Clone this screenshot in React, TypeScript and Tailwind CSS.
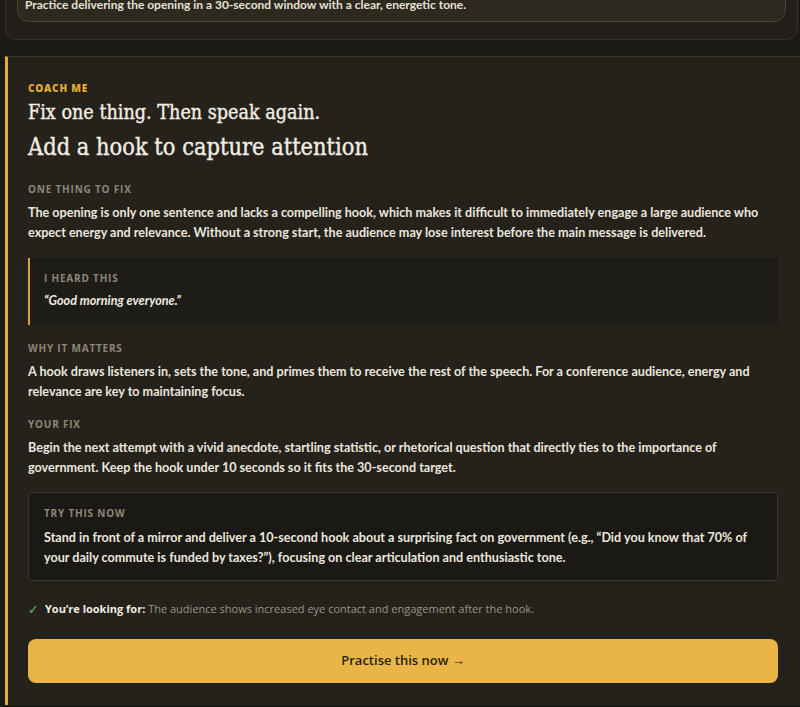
import React from 'react';

const sans = { fontFamily: '"Open Sans", "Noto Sans", sans-serif' };
const body = { fontFamily: 'Lato, "Open Sans", sans-serif' };
const serif = { fontFamily: '"DejaVu Serif Condensed", "DejaVu Serif", serif' };

function Label({ children }: { children: React.ReactNode }) {
  return (
    <p className="text-[10px] font-bold uppercase tracking-[0.08em] text-[#8e8777] leading-4">
      {children}
    </p>
  );
}

function Body({ children, className = '' }: { children: React.ReactNode; className?: string }) {
  return (
    <p className={`text-[12.6px] font-bold leading-5 text-[#ebe6dc] ${className}`} style={body}>
      {children}
    </p>
  );
}

export default function App() {
  return (
    <div className="min-h-[707px] bg-[#1c1a16] text-[#ebe6dc] overflow-hidden" style={sans}>
      {/* previous step card, scrolled mostly out of view */}
      <div className="-mt-[46px] ml-[5px] mr-[2px] rounded-b-xl border border-[#34302a] bg-[#221f1a] px-[11px] pt-[11px] pb-[17px]">
        <div className="rounded-xl border border-[#4a4430] bg-[#2c291f] px-[7px] pt-[30px] pb-[8px]">
          <p className="text-[12px] font-bold text-[#e6e1d4] leading-4" style={body}>
            Practice delivering the opening in a 30-second window with a clear, energetic tone.
          </p>
        </div>
      </div>

      {/* coach card */}
      <div className="mt-[16px] ml-[5px] border-l-[3px] border-t border-l-[#e6ad35] border-t-[#3a3528] bg-[#25221c] pl-[20px] pr-[22px] pt-[23px] pb-[22px]">
        <p className="text-[10px] font-extrabold uppercase tracking-[0.08em] text-[#e2aa33] leading-4">Coach me</p>
        <h2
          className="mt-[4px] text-[19.6px] leading-[26px] text-[#f2ede2] [-webkit-text-stroke:0.35px_#f2ede2]"
          style={serif}
        >
          Fix one thing. Then speak again.
        </h2>
        <h3
          className="mt-[6px] text-[23.4px] leading-[30px] text-[#f2ede2] [-webkit-text-stroke:0.35px_#f2ede2]"
          style={serif}
        >
          Add a hook to capture attention
        </h3>

        <div className="mt-[19px]">
          <Label>One thing to fix</Label>
          <Body className="mt-[6px]">
            The opening is only one sentence and lacks a compelling hook, which makes it difficult to immediately engage a large audience who expect energy and relevance. Without a strong start, the audience may lose interest before the main message is delivered.
          </Body>
        </div>

        <div className="mt-[15px] border-l-2 border-[#d9a133] bg-[#1e1c17] pl-[14px] pt-[12px] pb-[14px]">
          <Label>I heard this</Label>
          <p className="mt-[5px] text-[12.6px] font-bold italic leading-5 text-[#f0ebe0]" style={body}>
            “Good morning everyone.”
          </p>
        </div>

        <div className="mt-[15px]">
          <Label>Why it matters</Label>
          <Body className="mt-[6px]">
            A hook draws listeners in, sets the tone, and primes them to receive the rest of the speech. For a conference audience, energy and relevance are key to maintaining focus.
          </Body>
        </div>

        <div className="mt-[14px]">
          <Label>Your fix</Label>
          <Body className="mt-[6px]">
            Begin the next attempt with a vivid anecdote, startling statistic, or rhetorical question that directly ties to the importance of government. Keep the hook under 10 seconds so it fits the 30-second target.
          </Body>
        </div>

        <div className="mt-[14px] rounded border border-[#3b372b] bg-[#1b1915] px-[15px] pt-[12px] pb-[12px]">
          <Label>Try this now</Label>
          <Body className="mt-[7px]">
            Stand in front of a mirror and deliver a 10-second hook about a surprising fact on government (e.g., “Did you know that 70% of your daily commute is funded by taxes?”), focusing on clear articulation and enthusiastic tone.
          </Body>
        </div>

        <p className="mt-[20px] flex items-center gap-[6px] text-[11px] leading-4">
          <span className="text-[#5fae5a] text-[13px]">✓</span>
          <span>
            <span className="font-bold text-[#f2ede2]">You’re looking for:</span>{' '}
            <span className="text-[#9b9484]">The audience shows increased eye contact and engagement after the hook.</span>
          </span>
        </p>

        <button className="mt-[22px] flex h-[44px] w-full items-center justify-center rounded-lg bg-[#e8b546] text-[13px] font-semibold text-[#2a2310]">
          Practise this now →
        </button>
      </div>
    </div>
  );
}
